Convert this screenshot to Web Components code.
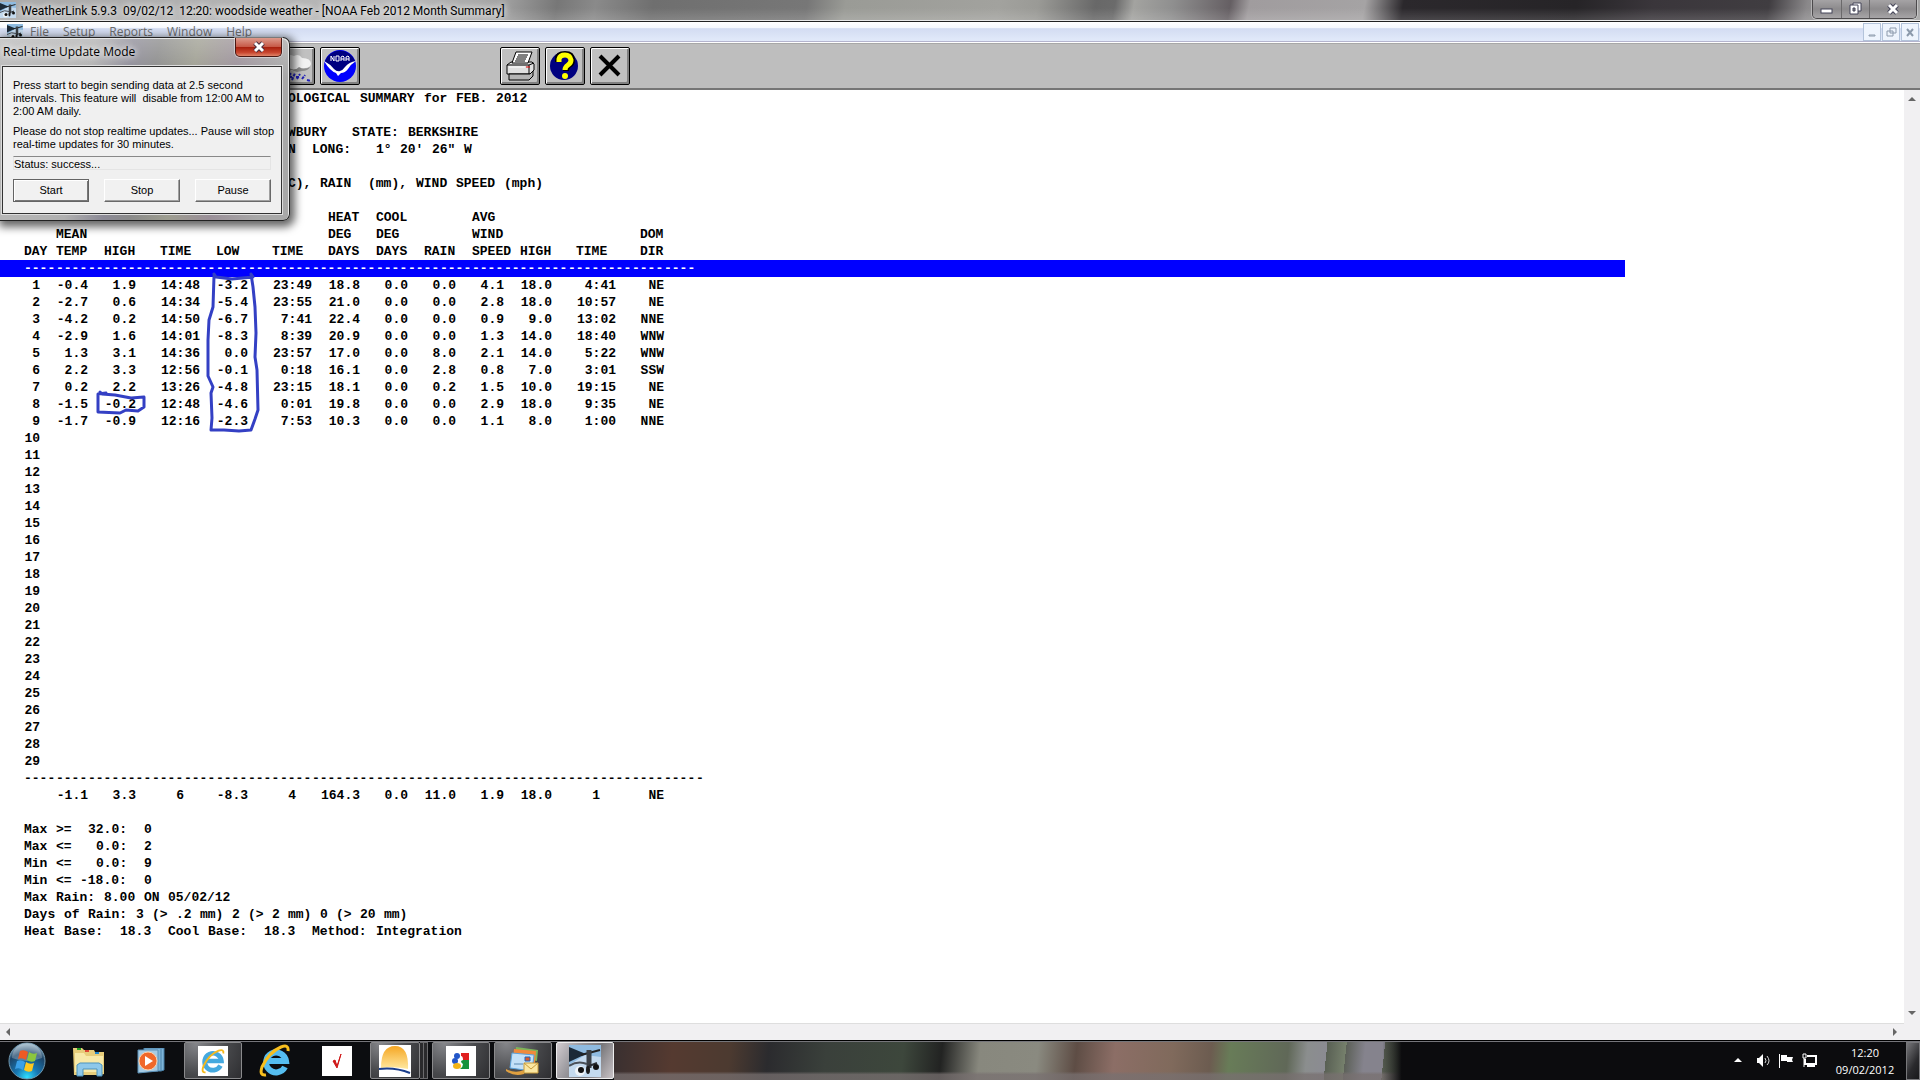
<!DOCTYPE html>
<html lang="en">
<head>
<meta charset="utf-8">
<title>WeatherLink 5.9.3</title>
<style>
  body{ margin:0; background:#0c0d10; font-family:"Open Sans","Noto Sans",sans-serif; font-size:12px; }
</style>
</head>
<body>
<weather-desktop></weather-desktop>

<!-- ─────────── desktop: main window + dialog + taskbar ─────────── -->
<template id="t-desktop">
  <style>
    :host{ display:flex; flex-direction:column; min-height:100vh; position:relative; }
    wl-window{ flex:1; }
    /* floats over the main window */
    realtime-dialog{ position:absolute; left:0; top:37px; }
  </style>
  <wl-window></wl-window>
  <task-bar></task-bar>
  <realtime-dialog heading="Real-time Update Mode">
    <p>Press start to begin sending data at 2.5 second intervals. This feature will&nbsp; disable from 12:00 AM to 2:00 AM daily.</p>
    <p>Please do not stop realtime updates... Pause will stop real-time updates for 30 minutes.</p>
  </realtime-dialog>
</template>

<!-- ─────────── station icon ─────────── -->
<template id="t-station">
  <style>
    :host{ display:block; width:16px; height:16px; }
    svg{ display:block; width:100%; height:100%; }
  </style>
  <svg viewBox="0 0 32 32" aria-hidden="true">
    <rect width="32" height="32" fill="#8fbbe0"/>
    <path d="M0 20 16 10 32 12V32H0z" fill="#c4daee"/>
    <path d="M0 2 17 9 0 17z" fill="#1c2a38"/>
    <path d="M12 10 31 5" stroke="#222" stroke-width="2"/>
    <path d="M20 5v18" stroke="#3b4046" stroke-width="5"/>
    <path d="M0 21q9-6 18-2" fill="none" stroke="#4a5058" stroke-width="2"/>
    <path d="M20 21 28 18" stroke="#2a2e33" stroke-width="2"/>
    <circle cx="11" cy="26" r="5" fill="#eef3f7"/>
    <circle cx="12" cy="25" r="3" fill="#111"/><ellipse cx="19" cy="25" rx="2" ry="4" fill="#1a1a1a"/><circle cx="27" cy="22" r="3" fill="#111"/>
  </svg>
</template>

<!-- ─────────── main window ─────────── -->
<template id="t-window">
  <style>
    :host{ display:flex; flex-direction:column; min-width:0; background:#fff; }
    .title{
      display:flex; align-items:center; height:20px; overflow:hidden;
      border-bottom:1px solid #e8e8e8; box-shadow:0 1px #222; margin-bottom:1px;
      background:
        linear-gradient(rgba(255,255,255,0) 40%,rgba(255,255,255,.14)),
        linear-gradient(100deg,#a9a9a9 0,#b9b9b9 21%,#a4a4a4 26%,#777 29%,#8a8a8a 31%,#6f6f6f 34%,#777 42%,#9a9b96 44%,#a2a29e 52%,#9a9a96 54%,#686868 57%,#6b6b6b 58%,#a3a3a0 59%,#8f8f8f 61%,#655f63 64%,#a09c9e 65%,#a5a3a4 71%,#2b282c 73%,#262427 82%,#3a363b 86%,#403d41 92%,#8a888a 94%,#a3a3a3 96%);
    }
    .title station-icon{ flex:none; margin-right:5px; }
    h1{ flex:1; margin:0; font:12px/20px Roboto,"Open Sans",sans-serif; white-space:pre; color:#000; padding-top:2px; }
    h1 span{ text-shadow:0 0 6px #fff,0 0 8px #fff; }
    .caps{ display:flex; height:18px; align-self:flex-start; margin-right:3px; border:1px solid #4c4a4c; border-top:0; border-radius:0 0 5px 5px; box-shadow:0 0 0 1px rgba(255,255,255,.35); overflow:hidden; }
    .caps button{ width:28px; padding:0; border:0; border-left:1px solid #6b696b; background:linear-gradient(#a5a3a5,#8c8a8c 50%,#a7a5a7); }
    .caps button:first-child{ border-left:0; }
    .caps button:last-child{ width:47px; }
    svg{ display:block; }
    button svg{ margin:auto; }
    .menu{
      display:flex; align-items:center; gap:14px; height:19px; padding-left:7px;
      background:linear-gradient(#fff,#f6f8fd 30%,#d3dcf2 35%,#e2eafa); border-bottom:1px solid #b4b4ce;
    }
    .menu station-icon{ margin-right:-7px; }
    .menu button{ padding:0; border:0; background:none; font:inherit; color:#6d6d6d; }
    .menu .mdi{ display:flex; gap:1px; margin-left:auto; margin-right:1px; }
    .menu .mdi button{ width:18px; height:18px; border:1px solid #b3c3da; background:#eef4fd; }
    .tools{
      display:flex; align-items:center; gap:5px; height:44px; margin-top:1px; padding-left:275px;
      background:#bebebe; border-top:1px solid #a8a8a8; border-bottom:2px solid #767676;
    }
    .gap{ width:130px; }
    .body{ flex:1; display:grid; grid-template-columns:1fr 16px; grid-template-rows:1fr 17px; background:#f0f0f0; }
    climate-report{ background:#fff; min-width:0; }
    .v,.h{ display:flex; justify-content:space-between; align-items:center; }
    .v{ flex-direction:column; padding:7px 0; }
    .h{ padding:0 6px; border-top:1px solid #dedede; }
    .v,.h,.body i{ background:#f1f0f2; }
  </style>
  <header class="title">
    <station-icon></station-icon>
    <h1><span>WeatherLink 5.9.3  09/02/12  12:20: woodside weather - [NOAA Feb 2012 Month Summary]</span></h1>
    <div class="caps">
      <button aria-label="Minimize"><svg width="14" height="14"><rect x="1" y="7" width="11" height="4" fill="#fff" stroke="#444458"/></svg></button>
      <button aria-label="Restore"><svg width="14" height="14" fill="#fff" stroke="#444458"><path d="M4 1h8v8H4z"/><path d="M1 3h8v9H1z"/><path d="M4 6h2v3H4z" fill="#888"/></svg></button>
      <button aria-label="Close"><svg width="14" height="14"><path d="M3 3 11 11M11 3 3 11" stroke="#444458" stroke-width="5"/><path d="M3 3 11 11M11 3 3 11" stroke="#fff" stroke-width="3"/></svg></button>
    </div>
  </header>
  <nav class="menu">
    <station-icon></station-icon>
    <button>File</button><button>Setup</button><button>Reports</button><button>Window</button><button>Help</button>
    <div class="mdi">
      <button aria-label="Minimize report"></button>
      <button aria-label="Restore report"></button>
      <button aria-label="Close report"></button>
    </div>
  </nav>
  <div class="tools">
    <tool-button label="Rain">
      <svg width="38" height="36" viewBox="0 0 38 36">
        <path d="M2 19q-1-7 6-8 3-6 10-3 5-3 8 2 9 0 9 6-1 4-6 4l-5 3-4-2-5 2-4-3-5 1z" fill="#f2f2f2"/>
        <path d="M2 18q6 4 10 1 6 5 11 0 5 3 11 0-2 4-8 4l-5 1-5-2-6 2-4-2z" fill="#8b8b8b"/>
        <path d="M1 31l4-7M6 32l4-7M11 31l4-6M16 32l3-7M21 31l3-5M26 31l3-4M31 32l4 1M2 28h5M10 29h6M20 29h4" stroke="#2020b8" stroke-width="2" stroke-dasharray="3 1"/>
      </svg>
    </tool-button>
    <tool-button label="NOAA report">
      <svg width="38" height="36" viewBox="0 0 38 36">
        <circle cx="19" cy="18" r="16" fill="#0000fe"/>
        <path d="M4 13A16 16 0 0 1 34 13L24 23H14z" fill="#000080"/>
        <path d="M3 13q6 3 10 8 3 3 6 2 3-1 5-4 4-5 11-6-5 3-8 8-3 4-7 4l-3 3-2-3q-6-2-12-12z" fill="#fff"/>
        <g fill="none" stroke="#fff"><path d="M10 13V8l3 5V8M15 8h3v5h-3zM20 13V9l2-1 1 1v4M20 11h3M25 13V9l2-1 1 1v4M25 11h3"/></g>
      </svg>
    </tool-button>
    <span class="gap"></span>
    <tool-button label="Print">
      <svg width="38" height="36" viewBox="0 0 38 36" stroke="#000">
        <path d="M6 17 10 14H31L33 16V22L29 26H6z" fill="#e0e0e0"/>
        <path d="M6 17H28L33 15M28 17V26" fill="none"/>
        <path d="M8 26H29L32 23V28L28 32H8z" fill="#b4b4b4"/>
        <path d="M11 15 15 4H31L27 15z" fill="#fff"/>
        <path d="M17 7h10M16 9h10M15 11h10M14 13h10" />
        <path d="M25 19h4" stroke="#d00"/><path d="M8 19h16" stroke="#fff"/>
      </svg>
    </tool-button>
    <tool-button label="Help">
      <svg width="38" height="36" viewBox="0 0 38 36">
        <circle cx="18" cy="18" r="14" fill="#000080"/>
        <path d="M12 14V11q0-5 7-5t7 6q0 4-3 5-3 2-3 6" fill="none" stroke="#000" stroke-width="6"/>
        <path d="M13 14V11q1-4 6-4t6 5q0 3-3 5-3 2-3 5" fill="none" stroke="#ff0" stroke-width="5"/>
        <circle cx="19" cy="28" r="3" fill="#ff0"/>
      </svg>
    </tool-button>
    <tool-button label="Close">
      <svg width="38" height="36" viewBox="0 0 38 36"><path d="M9 8 28 27M28 8 9 27" stroke="#000" stroke-width="4"/></svg>
    </tool-button>
  </div>
  <div class="body">
    <climate-report></climate-report>
    <div class="v">
      <svg width="8" height="5"><path d="M0 4 4 0 8 4z" fill="#666"/></svg>
      <svg width="8" height="5"><path d="M0 0 4 4 8 0z" fill="#666"/></svg>
    </div>
    <div class="h">
      <svg width="5" height="8"><path d="M4 0 0 4 4 8z" fill="#666"/></svg>
      <svg width="5" height="8"><path d="M0 0 4 4 0 8z" fill="#666"/></svg>
    </div>
    <i></i>
  </div>
</template>

<template id="t-tool">
  <style>
    :host{ display:block; }
    button{
      display:block; width:40px; height:38px; padding:0; background:#c0c0c0;
      border:1px solid #000; border-radius:2px; box-shadow:inset 1px 1px #fff,inset -2px -2px #808080;
    }
  </style>
  <button><slot></slot></button>
</template>

<!-- ─────────── NOAA report ─────────── -->
<template id="t-report">
  <style>
    :host{ display:block; position:relative; font:bold 13px/17px "Liberation Mono","Courier New",monospace; color:#000; }
    .text{ padding-left:24px; white-space:pre; }
    .line{ height:17px; }
    .line span{ display:inline-block; }
    table{ width:100%; max-width:1625px; table-layout:fixed; border-collapse:collapse; }
    td,th{ padding:0; height:17px; text-align:right; white-space:pre; }
    th{ padding-left:16px; text-align:left; vertical-align:bottom; font-weight:bold; }
    th.day{ padding-left:24px; }
    th.wide{ padding-left:24px; }
    .rule td{ padding-left:24px; text-align:left; }
    .rule span{ display:inline-block; width:32px; }
    .band{ background:#00f; color:#fff; }
    .total .wide{ padding-right:16px; }
    /* pen marks drawn over the figures */
    .pen{ position:absolute; left:0; top:0; pointer-events:none; }
  </style>
  <div class="text" id="head"></div>
  <table>
    <colgroup id="cols"></colgroup>
    <thead></thead>
    <tbody></tbody>
    <tfoot></tfoot>
  </table>
  <div class="text" id="foot"></div>
  <svg class="pen" width="300" height="360" viewBox="0 90 300 360" fill="none" stroke="#3440c4" stroke-width="3" stroke-linejoin="round" stroke-linecap="round" aria-hidden="true">
    <path d="M214 274 216 277 232 279 253 277 251 274 253 287 255 307 256 333 255 357 257 370 258 410 255 419 251 430 239 431 224 430 211 430 212 418 211 393 213 387 208 376 208 340 209 320 213 307 214 276"/>
    <path d="M100 392 102 394 115 395 131 398 144 397 144 407 138 411 126 410 120 413 98 412 98 394 106 393"/>
  </svg>
</template>

<!-- ─────────── real-time dialog ─────────── -->
<template id="t-dialog">
  <style>
    :host{
      display:block; box-sizing:border-box; width:290px; padding:0 7px 6px 2px;
      border:1px solid #222; border-left:0; border-radius:0 7px 7px 0;
      background:
        linear-gradient(rgba(255,255,255,.25),rgba(255,255,255,0) 40px),
        linear-gradient(100deg,#b9b9b9 0,#b0b0b0 30%,#8c8a96 42%,#8a8a8a 50%,#9d9d90 62%,#9a8f98 75%,#a8a8a8 90%);
      box-shadow:inset -1px 1px #e6e6e6,2px 3px 9px 3px rgba(0,0,0,.6);
    }
    header{ display:flex; align-items:center; height:28px; padding-left:1px; }
    h2{ flex:1; margin:0; font-size:12px; font-weight:normal; line-height:28px; text-shadow:0 0 6px #fff,0 0 8px #fff; }
    .x{
      align-self:flex-start; width:47px; height:19px; padding:0; border:1px solid #4a1712; border-top:0; border-radius:0 0 5px 5px;
      background:linear-gradient(#dd9a8c,#c75a48 48%,#a8200e 52%,#c8452e 80%,#e08468); box-shadow:0 0 0 1px rgba(255,255,255,.4);
    }
    .x svg{ display:block; margin:auto; }
    .pane{ border:1px solid #333; background:#f0f0f0; padding:12px 3px 11px 10px; box-shadow:0 0 0 1px #ddd; font:11px/13px "Liberation Sans",Arial,sans-serif; }
    ::slotted(p){ margin:0 0 7px; }
    ::slotted(p:last-child){ margin-bottom:5px; }
    .status,.row{ margin-right:7px; }
    .status{ display:block; box-sizing:border-box; height:14px; line-height:14px; margin-bottom:9px; border:1px solid #e4e4e4; border-top-color:#888; }
    .row{ display:flex; justify-content:space-between; }
    .row button{
      width:76px; height:23px; padding:0; font:inherit; background:#f1f1f1;
      border:1px solid; border-color:#fff #696969 #696969 #fff; box-shadow:inset -1px -1px #a0a0a0;
    }
    .row .default{ border-color:#646464; box-shadow:inset 1px 1px #fff,inset -1px -1px #777; }
  </style>
  <header>
    <h2></h2>
    <button class="x" aria-label="Close dialog"><svg width="14" height="12"><path d="M3 2 11 10M11 2 3 10" stroke="#4a3040" stroke-width="5"/><path d="M3 2 11 10M11 2 3 10" stroke="#fff" stroke-width="3"/></svg></button>
  </header>
  <div class="pane">
    <slot></slot>
    <output class="status">Status: success...</output>
    <div class="row"><button class="default">Start</button><button>Stop</button><button>Pause</button></div>
  </div>
</template>

<!-- ─────────── taskbar ─────────── -->
<template id="t-taskbar">
  <style>
    :host{
      display:flex; align-items:stretch; gap:4px; box-sizing:border-box; height:40px; color:#fff;
      border-top:1px solid #000; box-shadow:inset 0 1px #75757a;
      background:
        linear-gradient(90deg,#0c0d10 32%,transparent 32%,transparent 72%,#0c0c0e 73%),
        linear-gradient(transparent 78%,rgba(120,112,112,.75) 86%),
        linear-gradient(96deg,transparent 67%,#8b8e8e 68%,#8b8b92 69%,#596054 69%,#76806c 70%,#5c6058 70%,#85838d 71%,#85838d 72%,#555b50 72%,#6f7a66 73%),
        linear-gradient(96deg,#3a3030 32%,#553a30 35%,#4c3a30 38%,#2b2b2e 40%,#3a403b 43%,#3d473c 47%,#222322 49%,#88887e 51%,#8a8a80 54%,#5e4d45 56%,#8c6e66 58%,#806a5c 61%,#6c5c50 63%,#687c58 64%,#606858 67%);
    }
    .start{ width:54px; margin-right:2px; padding:0; border:0; background:none; }
    svg{ display:block; margin:auto; }
    station-icon{ width:32px; height:32px; margin:auto; }
    system-tray{ margin-left:auto; }
  </style>
  <button class="start" aria-label="Start">
    <svg width="38" height="38" viewBox="0 0 38 38">
      <defs><radialGradient id="orb" cx=".5" cy=".95" r=".9"><stop offset="0" stop-color="#2fe0ff"/><stop offset=".35" stop-color="#1878b4"/><stop offset=".75" stop-color="#1c4468"/><stop offset="1" stop-color="#8aa8bc"/></radialGradient></defs>
      <circle cx="19" cy="19" r="18" fill="url(#orb)" stroke="#6f98b0"/>
      <path d="M4 16A15 15 0 0 1 34 16Q19 22 4 16z" fill="#fff" opacity=".25"/>
      <path d="M12 9q4-2 8 1l-2 8q-4-3-8-1z" fill="#ee5a24"/>
      <path d="M21 10q4 3 8 1l-2 8q-4 2-8-1z" fill="#8cc63e"/>
      <path d="M9 19q4-2 8 1l-2 8q-4-3-8-1z" fill="#3aa0e8"/>
      <path d="M18 20q4 3 8 1l-2 8q-4 2-8-1z" fill="#ffc81e"/>
    </svg>
  </button>
  <task-item label="Windows Explorer">
    <svg width="34" height="32" viewBox="0 0 34 32">
      <path d="M1 3h9l2 2h10l1 2h9v22l-3 1H2z" fill="#e8cd7a"/><path d="M3 8h9l2 3h17v16H3z" fill="#f8e9a8"/>
      <path d="M5 3h4v2H5z" fill="#21a121"/><path d="M13 5h4v2h-4z" fill="#d43"/><path d="M23 7h4v2h-4z" fill="#28c"/>
      <path d="M5 31V20l3-2h19l3 2v11h-5v-7H11v7z" fill="#8ec8ea" stroke="#4d93bd"/>
    </svg>
  </task-item>
  <task-item label="Media Player">
    <svg width="28" height="26" viewBox="0 0 28 26">
      <path d="M7 0h20v22l-3 1H7z" fill="#7eb4d8" stroke="#477fa6"/><path d="M24 1v22" stroke="#4b82a8"/>
      <path d="M1 2h20v21l-20 2z" fill="#a6cbe4" stroke="#5b8fb4"/>
      <circle cx="11" cy="13" r="9" fill="#f0682a" stroke="#ffd0a8"/><path d="M8 8v10l8-5z" fill="#fff"/>
    </svg>
  </task-item>
  <task-item label="Web page" open>
    <svg width="30" height="30" viewBox="0 0 32 32">
      <rect width="32" height="32" fill="#fff"/>
      <path d="M24 21a9 9 0 1 1 1-5H9" fill="none" stroke="#45a9df" stroke-width="5"/>
      <path d="M8 28q-5 1-2-7Q12 9 22 5q6-2 5 3" fill="none" stroke="#f5b91c" stroke-width="2"/>
    </svg>
  </task-item>
  <task-item label="Internet Explorer">
    <svg width="32" height="34" viewBox="0 0 32 34">
      <path d="M26 23a10 10 0 1 1 1-6H10" fill="none" stroke="#55bdf0" stroke-width="6"/>
      <path d="M7 31q-7 1-4-8Q10 8 22 3q8-3 7 4" fill="none" stroke="#f8bf1e" stroke-width="3"/>
    </svg>
  </task-item>
  <task-item label="Notes">
    <svg width="30" height="30" viewBox="0 0 30 30"><rect width="30" height="30" fill="#fff"/><path d="M11 15l2-1 2 6 4-12-4 14z" fill="#d01818" stroke="#d01818"/></svg>
  </task-item>
  <task-item label="Weather Display" open stack>
    <svg width="32" height="32" viewBox="0 0 32 32">
      <defs><linearGradient id="sun" x2="0" y2="1"><stop offset="0" stop-color="#f5a623"/><stop offset="1" stop-color="#ffe9a0"/></linearGradient></defs>
      <rect width="32" height="32" fill="#fff"/><path d="M2 23Q2 1 16 1T29 24Q15 21 2 23z" fill="url(#sun)"/><path d="M0 24q16-2 31 4" fill="none" stroke="#1a3e8c" stroke-width="2"/>
    </svg>
  </task-item>
  <task-item label="Google" open>
    <svg width="30" height="30" viewBox="0 0 30 30">
      <rect width="30" height="30" fill="#fff"/><path d="M15 7h8v7h-6q0-4-2-4z" fill="#e02020"/><path d="M17 14h6v9h-9q3-2 3-5-2-1-2-3z" fill="#17923c"/>
      <circle cx="11" cy="10" r="3" fill="#2256c8"/><circle cx="9" cy="15" r="3" fill="#2256c8"/><ellipse cx="11" cy="20" rx="4" ry="3" fill="#f2b418"/>
    </svg>
  </task-item>
  <task-item label="Live Mail" open>
    <svg width="34" height="28" viewBox="0 0 34 28">
      <path d="M10 0 32 3 31 14 9 10z" fill="#7cb55a"/><path d="M8 2 30 4 29 16 7 12z" fill="#f08a3c"/>
      <path d="M6 6 28 8 26 24 4 21z" fill="#c4e1f8" stroke="#5aa2dc"/><path d="M19 10h5v4h-5z" fill="#d8582c" stroke="#1d66c0"/><path d="M8 17h9" stroke="#5a88b0"/>
      <path d="M0 22q9 5 18 1v4Q8 30 0 24z" fill="#e0a040"/><path d="M18 16h14v10H18z" fill="#fbe7a2" stroke="#c89b3a"/><path d="M18 16l7 6 7-6" fill="none" stroke="#c89b3a"/>
    </svg>
  </task-item>
  <task-item label="WeatherLink" open active><station-icon></station-icon></task-item>
  <system-tray></system-tray>
</template>

<template id="t-item">
  <style>
    :host{ display:flex; width:58px; }
    button{ flex:1; display:grid; place-items:center; padding:0; margin:1px 0 1px; border:1px solid transparent; border-radius:2px; background:none; }
    :host([open]) button{ border-color:#8a8a8c; background:radial-gradient(circle at 20% 0,#85868a,#47484b 55%,#2e2e31); }
    :host([active]) button{ border-color:#eee; background:linear-gradient(120deg,#d2ccd0,#96959a 35%,#777679 60%,#c8c2c6); }
    .edge{ display:none; width:3px; margin:1px 0; border:1px solid #6a6a6c; border-left:0; background:#2a2a2c; }
    :host([stack]) .edge{ display:block; }
  </style>
  <button><slot></slot></button><span class="edge"></span><span class="edge"></span>
</template>

<template id="t-tray">
  <style>
    :host{ display:flex; align-items:center; gap:9px; }
    .clock{ width:60px; margin:0 2px 0 9px; text-align:center; font-size:11px; line-height:17px; }
    .clock time{ display:block; }
    .peek{ width:14px; height:38px; padding:0; border:1px solid #77777a; background:linear-gradient(120deg,#77777a,#2a2a2d 60%,#18181a); }
    svg{ display:block; }
    .more{ margin-right:5px; }
  </style>
  <svg class="more" width="8" height="5"><path d="M0 4 4 0 8 4z" fill="#fff"/></svg>
  <svg width="14" height="16" fill="#fff"><path d="M1 5h2l4-4v13l-4-4H1z"/><path d="M9 5q2 3 0 5M11 3q4 5 0 9" fill="none" stroke="#ddd"/></svg>
  <svg width="14" height="16" fill="#fff"><path d="M0 1h1v14H0zM2 2h6v2h6l-1 3 1 2H8V8H2z"/></svg>
  <svg width="15" height="15" fill="none" stroke="#fff"><path d="M5 3h9v8H3V6M5 13h8M8 11v2" stroke-width="2"/><path d="M1 1h3v4H1zM2 5v9"/></svg>
  <div class="clock"><time>12:20</time><time>09/02/2012</time></div>
  <button class="peek" aria-label="Show desktop"></button>
</template>

<script>
(function(){
  // shared base: clone the template into an open root
  class WlElement extends HTMLElement {
    constructor(){
      super();
      this.attachShadow({mode:'open'});
      const tpl = document.getElementById(this.constructor.tpl);
      this.shadowRoot.appendChild(tpl.content.cloneNode(true));
    }
    $(sel){ return this.shadowRoot.querySelector(sel); }
  }

  // ───────────── report data ─────────────
  const CELL = 8; // character cell width
  const HEAD = [
    '                                 OLOGICAL SUMMARY for FEB. 2012',
    '',
    '                                 WBURY   STATE: BERKSHIRE',
    '                                 N  LONG:   1° 20\' 26" W',
    '',
    '                                 C), RAIN  (mm), WIND SPEED (mph)',
    ''
  ];
  const COLS = [40,48,48,64,48,64,48,48,48,48,48,64,48];
  const WIDE = [3,5,11]; // time columns
  const TITLES = ['DAY','MEAN\nTEMP','HIGH','TIME','LOW','TIME','HEAT\nDEG\nDAYS','COOL\nDEG\nDAYS','RAIN','AVG\nWIND\nSPEED','HIGH','TIME','DOM\nDIR'];
  const DAYS = [
    '1 -0.4 1.9 14:48 -3.2 23:49 18.8 0.0 0.0 4.1 18.0 4:41 NE',
    '2 -2.7 0.6 14:34 -5.4 23:55 21.0 0.0 0.0 2.8 18.0 10:57 NE',
    '3 -4.2 0.2 14:50 -6.7 7:41 22.4 0.0 0.0 0.9 9.0 13:02 NNE',
    '4 -2.9 1.6 14:01 -8.3 8:39 20.9 0.0 0.0 1.3 14.0 18:40 WNW',
    '5 1.3 3.1 14:36 0.0 23:57 17.0 0.0 8.0 2.1 14.0 5:22 WNW',
    '6 2.2 3.3 12:56 -0.1 0:18 16.1 0.0 2.8 0.8 7.0 3:01 SSW',
    '7 0.2 2.2 13:26 -4.8 23:15 18.1 0.0 0.2 1.5 10.0 19:15 NE',
    '8 -1.5 -0.2 12:48 -4.6 0:01 19.8 0.0 0.0 2.9 18.0 9:35 NE',
    '9 -1.7 -0.9 12:16 -2.3 7:53 10.3 0.0 0.0 1.1 8.0 1:00 NNE'
  ];
  const TOTAL = ['','-1.1','3.3','6','-8.3','4','164.3','0.0','11.0','1.9','18.0','1','NE'];
  const FOOT = [
    '',
    'Max >=  32.0:  0',
    'Max <=   0.0:  2',
    'Min <=   0.0:  9',
    'Min <= -18.0:  0',
    'Max Rain: 8.00 ON 05/02/12',
    'Days of Rain: 3 (> .2 mm) 2 (> 2 mm) 0 (> 20 mm)',
    'Heat Base:  18.3  Cool Base:  18.3  Method: Integration'
  ];

  class ClimateReport extends WlElement {
    static tpl = 't-report';
    connectedCallback(){
      this.$('#head').append(...HEAD.map(l => this._line(l)));
      this.$('#foot').append(...FOOT.map(l => this._line(l)));
      this.$('#cols').innerHTML = COLS.map(w => `<col style="width:${w}px">`).join('') + '<col>';
      const cls = i => WIDE.includes(i) || i === 12 ? ' class="wide"' : '';
      this.$('thead').innerHTML =
        '<tr>' + TITLES.map((t,i) => `<th scope="col"${i ? cls(i) : ' class="day"'}>${t}</th>`).join('') + '</tr>' +
        this._rule(84, 'rule band');
      let rows = '';
      for (let d = 1; d <= 29; d++){
        const cells = DAYS[d-1] ? DAYS[d-1].split(' ') : [d];
        rows += '<tr>' + cells.map(c => `<td>${c}</td>`).join('') + '</tr>';
      }
      this.$('tbody').innerHTML = rows;
      this.$('tfoot').innerHTML = this._rule(85, 'rule') +
        '<tr class="total">' + TOTAL.map((c,i) => `<td${WIDE.includes(i) ? cls(i) : ''}>${c}</td>`).join('') + '</tr>';
    }
    // each word takes a whole number of character cells
    _line(text){
      const div = document.createElement('div');
      div.className = 'line';
      (text.match(/^\s+|\S+\s*/g) || []).forEach(run => {
        const s = document.createElement('span');
        s.style.width = run.length * CELL + 'px';
        s.textContent = run;
        div.appendChild(s);
      });
      return div;
    }
    _rule(n, cls){
      const parts = '-'.repeat(n).match(/-{1,4}/g).map(p => `<span>${p}</span>`).join('');
      return `<tr class="${cls}"><td colspan="14">${parts}</td></tr>`;
    }
  }

  class StationIcon extends WlElement { static tpl = 't-station'; }
  class WlWindow extends WlElement {
    static tpl = 't-window';
    connectedCallback(){
      const glyphs = [
        '<path d="M3 9h6v1H3z" stroke="#8c9aac"/>',
        '<path d="M5 2h6v5H5zM2 5h6v5H2z" fill="#eef4fd" stroke="#8c9aac"/>',
        '<path d="M3 3l6 7M9 3l-6 7" stroke="#8c9aac" stroke-width="2"/>'
      ];
      this.shadowRoot.querySelectorAll('.mdi button').forEach((b,i) => {
        b.innerHTML = `<svg width="12" height="12" fill="none">${glyphs[i]}</svg>`;
      });
    }
  }
  class ToolButton extends WlElement {
    static tpl = 't-tool';
    connectedCallback(){ this.$('button').setAttribute('aria-label', this.getAttribute('label')); }
  }
  class TaskItem extends WlElement {
    static tpl = 't-item';
    connectedCallback(){ this.$('button').setAttribute('aria-label', this.getAttribute('label')); }
  }
  class RealtimeDialog extends WlElement {
    static tpl = 't-dialog';
    connectedCallback(){
      this.setAttribute('role','dialog');
      this.$('h2').textContent = this.getAttribute('heading');
    }
  }
  class SystemTray extends WlElement { static tpl = 't-tray'; }
  class TaskBar extends WlElement { static tpl = 't-taskbar'; }
  class WeatherDesktop extends WlElement { static tpl = 't-desktop'; }

  customElements.define('station-icon', StationIcon);
  customElements.define('tool-button', ToolButton);
  customElements.define('task-item', TaskItem);
  customElements.define('system-tray', SystemTray);
  customElements.define('climate-report', ClimateReport);
  customElements.define('wl-window', WlWindow);
  customElements.define('realtime-dialog', RealtimeDialog);
  customElements.define('task-bar', TaskBar);
  customElements.define('weather-desktop', WeatherDesktop);
})();
</script>
</body>
</html>
